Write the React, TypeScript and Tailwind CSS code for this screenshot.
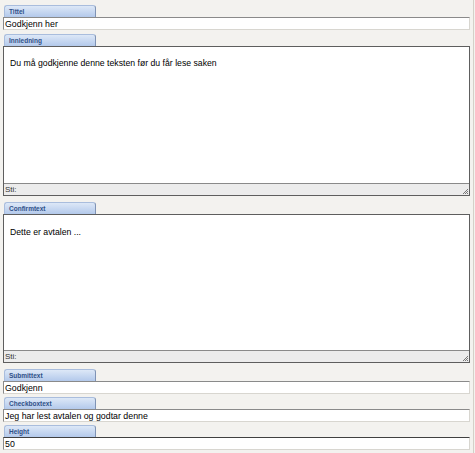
import React from "react";

const Tab = ({ label, mt }: { label: string; mt: string }) => (
  <div className={`${mt} ml-[1px] h-[12px] w-[92px] rounded-t-[3px] border border-b-0 border-[#a9bddd] border-r-[#7f93b5] bg-gradient-to-b from-[#dde8f7] to-[#b3c9eb] pl-[4px] text-[6.5px] font-bold leading-[11px] text-[#2f5088]`}>
    {label}
  </div>
);

const Input = ({ value, dark }: { value: string; dark?: boolean }) => (
  <div className={`h-[13px] w-[467px] border ${dark ? "border-t-[#404040]" : "border-t-[#8a8a8a]"} border-l-[#8a8a8a] border-r-[#d8d6d0] border-b-[#d8d6d0] bg-white pl-[1px] text-[8.8px] leading-[12px] text-black`}>
    {value}
  </div>
);

const Area = ({ value, h, pt }: { value: string; h: string; pt: string }) => (
  <div className="w-[467px] border border-[#5e5e5e] bg-white">
    <div className={`${h} ${pt} pl-[6px] text-[8.7px] leading-[12px] text-black`}>{value}</div>
    <div className="relative h-[12px] border-t border-[#8a8a8a] bg-[#ececec] pl-[1px] text-[8px] leading-[11px] text-[#333]">
      Sti:
      <svg className="absolute bottom-0 right-0" width="7" height="7" viewBox="0 0 7 7">
        <path d="M6 1 L1 6 M6 3 L3 6 M6 5 L5 6" stroke="#777" strokeWidth="1" />
      </svg>
    </div>
  </div>
);

export default function App() {
  return (
    <div className="h-[453px] w-[475px] bg-[#f3f2ef]" style={{ fontFamily: "'Liberation Sans', Arial, sans-serif" }}>
      <div className="flex h-full w-[474px] flex-col border-r border-[#d4d0c8] pl-[3px]">
        <Tab label="Tittel" mt="mt-[5px]" />
        <Input value="Godkjenn her" />
        <Tab label="Innledning" mt="mt-[4px]" />
        <Area value="Du må godkjenne denne teksten før du får lese saken" h="h-[136px]" pt="pt-[10px]" />
        <Tab label="Confirmtext" mt="mt-[6px]" />
        <Area value="Dette er avtalen ..." h="h-[135px]" pt="pt-[11px]" />
        <Tab label="Submittext" mt="mt-[6px]" />
        <Input value="Godkjenn" />
        <Tab label="Checkboxtext" mt="mt-[3px]" />
        <Input value="Jeg har lest avtalen og godtar denne" />
        <Tab label="Height" mt="mt-[3px]" />
        <Input value="50" dark />
      </div>
    </div>
  );
}
